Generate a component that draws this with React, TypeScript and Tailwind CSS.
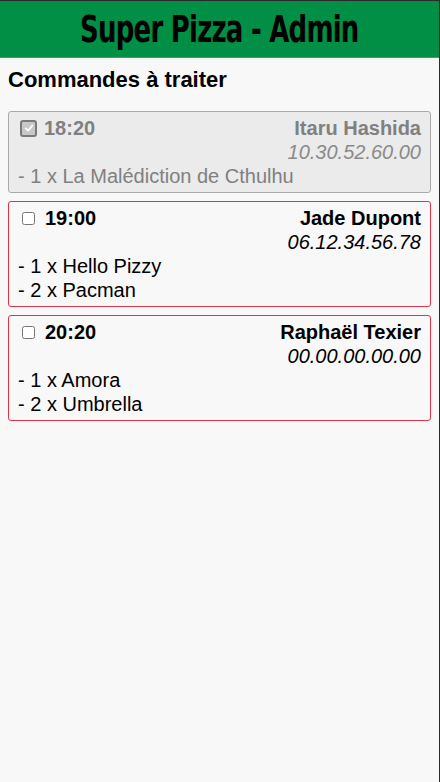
import React from "react";

type Order = {
  time: string;
  name: string;
  phone: string;
  items: string[];
  done: boolean;
};

const orders: Order[] = [
  {
    time: "18:20",
    name: "Itaru Hashida",
    phone: "10.30.52.60.00",
    items: ["1 x La Malédiction de Cthulhu"],
    done: true,
  },
  {
    time: "19:00",
    name: "Jade Dupont",
    phone: "06.12.34.56.78",
    items: ["1 x Hello Pizzy", "2 x Pacman"],
    done: false,
  },
  {
    time: "20:20",
    name: "Raphaël Texier",
    phone: "00.00.00.00.00",
    items: ["1 x Amora", "2 x Umbrella"],
    done: false,
  },
];

function CheckedBox() {
  return (
    <span className="inline-flex items-center justify-center w-[17px] h-[17px] ml-[2px] mr-[7px] rounded-[3px] border-2 border-[#7a7a7a] bg-[#c8c8c8]">
      <svg viewBox="0 0 12 12" className="w-[10px] h-[10px]">
        <path
          d="M2 6.5 L5 9.2 L10 3"
          fill="none"
          stroke="#ffffff"
          strokeWidth="2"
          strokeLinecap="round"
          strokeLinejoin="round"
        />
      </svg>
    </span>
  );
}

function OrderCard({ order }: { order: Order }) {
  const done = order.done;
  return (
    <div
      className={
        done
          ? "rounded-[3px] border border-[#a9a9a9] bg-[#ebebeb] text-[#808080] px-[9px] py-1"
          : "rounded-[3px] border border-[#dc3545] bg-[#f8f8f8] text-black px-[9px] py-1"
      }
    >
      <div className="flex items-center justify-between">
        <div className="flex items-center font-bold">
          {done ? (
            <CheckedBox />
          ) : (
            <input type="checkbox" className="w-[13px] h-[13px] ml-1 mr-[10px]" />
          )}
          <span>{order.time}</span>
        </div>
        <span className="font-bold">{order.name}</span>
      </div>
      <div className={done ? "text-right italic text-[#8a8a8a]" : "text-right italic"}>
        {order.phone}
      </div>
      {order.items.map((item, i) => (
        <div key={i}>- {item}</div>
      ))}
    </div>
  );
}

export default function App() {
  return (
    <div className="min-h-screen bg-[#f8f8f8] border-t border-r border-[#2b2b2b] font-['Liberation_Sans',Arial,sans-serif]">
      {/* HEADER */}
      <header className="h-[57px] bg-[#008f45] border-b border-[#2fa862] flex items-center justify-center">
        <h1 className="text-black text-[38px] leading-none font-bold font-['Impact','DejaVu_Sans_Condensed',sans-serif] tracking-[-1px] scale-x-[0.76] inline-block">
          Super Pizza - Admin
        </h1>
      </header>

      {/* ORDERS */}
      <main className="px-2">
        <h2 className="text-[22px] leading-6 font-bold mt-[10px] mb-[19px]">
          Commandes à traiter
        </h2>
        <div className="flex flex-col gap-2 text-[20px] leading-6">
          {orders.map((o, i) => (
            <OrderCard key={i} order={o} />
          ))}
        </div>
      </main>
    </div>
  );
}
